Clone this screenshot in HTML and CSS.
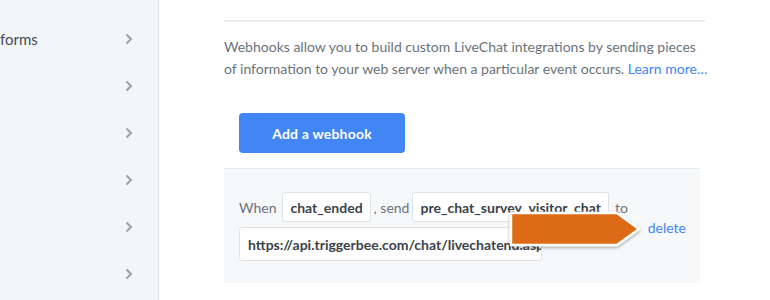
FILE: index.html
```html
<!DOCTYPE html>
<html>
<head>
<meta charset="utf-8">
<link rel="stylesheet" href="styles.css">
</head>
<body>
<div class="page">
  <aside class="sidebar">
    <div class="nav-item"><span class="nav-label">forms</span><svg class="chev" width="8" height="12" viewBox="0 0 8 12"><path d="M1.5 1.5 L6 6 L1.5 10.5" fill="none" stroke="#9ba1a6" stroke-width="2"/></svg></div>
    <div class="nav-item"><span class="nav-label"></span><svg class="chev" width="8" height="12" viewBox="0 0 8 12"><path d="M1.5 1.5 L6 6 L1.5 10.5" fill="none" stroke="#9ba1a6" stroke-width="2"/></svg></div>
    <div class="nav-item"><span class="nav-label"></span><svg class="chev" width="8" height="12" viewBox="0 0 8 12"><path d="M1.5 1.5 L6 6 L1.5 10.5" fill="none" stroke="#9ba1a6" stroke-width="2"/></svg></div>
    <div class="nav-item"><span class="nav-label"></span><svg class="chev" width="8" height="12" viewBox="0 0 8 12"><path d="M1.5 1.5 L6 6 L1.5 10.5" fill="none" stroke="#9ba1a6" stroke-width="2"/></svg></div>
    <div class="nav-item"><span class="nav-label"></span><svg class="chev" width="8" height="12" viewBox="0 0 8 12"><path d="M1.5 1.5 L6 6 L1.5 10.5" fill="none" stroke="#9ba1a6" stroke-width="2"/></svg></div>
    <div class="nav-item"><span class="nav-label"></span><svg class="chev" width="8" height="12" viewBox="0 0 8 12"><path d="M1.5 1.5 L6 6 L1.5 10.5" fill="none" stroke="#9ba1a6" stroke-width="2"/></svg></div>
  </aside>
  <main class="content">
    <hr class="rule">
    <p class="intro">Webhooks allow you to build custom LiveChat integrations by sending pieces of information to your web server when a particular event occurs. <a class="link">Learn more…</a></p>
    <button class="btn-primary">Add a webhook</button>
    <div class="webhook">
      <div class="webhook-body">
        <div class="row">
          <span class="word">When</span>
          <span class="chip">chat_ended</span>
          <span class="word tight">, send</span>
          <span class="chip">pre_chat_survey_visitor_chat</span>
          <span class="word">to</span>
        </div>
        <div class="row">
          <span class="url">https://api.triggerbee.com/chat/livechatend.aspx</span>
        </div>
      </div>
      <a class="link delete">delete</a>
      <svg class="pointer" width="140" height="42" viewBox="0 0 140 42">
        <defs>
          <filter id="sh" x="-10%" y="-20%" width="120%" height="150%">
            <feDropShadow dx="0" dy="1.5" stdDeviation="1.8" flood-color="#000" flood-opacity="0.35"/>
          </filter>
        </defs>
        <path d="M4 4 H110 L132 20 L110 36 H4 Z" fill="#dd6b13" stroke="#ffffff" stroke-width="2.5" stroke-linejoin="round" filter="url(#sh)"/>
      </svg>
    </div>
  </main>
</div>
</body>
</html>
```

FILE: styles.css
```css
* { box-sizing: border-box; }
html, body { margin: 0; padding: 0; background: #ffffff; }
body {
  font-family: Lato, "Open Sans", "Liberation Sans", sans-serif;
  width: 770px;
  height: 300px;
  overflow: hidden;
}
.page { display: flex; height: 300px; }
.sidebar {
  width: 159px;
  flex: none;
  background: #f3f6f9;
  border-right: 1px solid #dde3ea;
  padding-top: 15px;
}
.nav-item {
  height: 47px;
  display: flex;
  align-items: center;
  justify-content: space-between;
  padding-right: 25px;
}
.nav-label {
  font-size: 15px;
  color: #424d57;
}
.chev { display: block; }
.content {
  padding-left: 65px;
  padding-top: 20px;
  width: 546px;
  flex: none;
}
.rule {
  margin: 0;
  border: 0;
  border-top: 2px solid #e9ebed;
  width: 481px;
}
.intro {
  margin: 14px 0 0;
  font-size: 14px;
  line-height: 22px;
  color: #6a737c;
  width: 484px;
}
.link { color: #4384f5; cursor: pointer; }
.btn-primary {
  margin: 33px 0 0 15px;
  display: block;
  width: 166px;
  height: 40px;
  border: 0;
  border-radius: 4px;
  background: #4285f4;
  color: #ffffff;
  font-family: inherit;
  font-size: 14px;
  font-weight: 700;
  letter-spacing: 0.2px;
}
.webhook {
  position: relative;
  margin-top: 15px;
  width: 476px;
  height: 115px;
  background: #f6f8fa;
  border-top: 1px solid #e6e9ec;
  display: flex;
  align-items: center;
  padding: 0 14px 0 15px;
}
.webhook-body {
  display: flex;
  flex-direction: column;
  gap: 5px;
  padding-top: 1px;
}
.row { display: flex; align-items: center; gap: 6px; }
.word { font-size: 14px; color: #6a737c; white-space: nowrap; }
.word.tight { margin-left: -3px; margin-right: -3px; }
.chip {
  height: 30px;
  display: inline-flex;
  align-items: center;
  padding: 0 7px;
  background: #ffffff;
  border: 1px solid #dfe3e7;
  border-radius: 3px;
  font-size: 14px;
  font-weight: 700;
  color: #3a434c;
  white-space: nowrap;
}
.row .chip:first-of-type { margin-left: 1px; }
.url {
  width: 303px;
  height: 34px;
  display: flex;
  align-items: center;
  padding: 0 8px;
  background: #ffffff;
  border: 1px solid #dfe3e7;
  border-radius: 3px;
  font-size: 14px;
  font-weight: 700;
  color: #3a434c;
  white-space: nowrap;
  overflow: hidden;
}
.delete {
  margin-left: auto;
  font-size: 14px;
  margin-top: 2px;
}
.pointer {
  position: absolute;
  left: 283px;
  top: 40px;
}
```
